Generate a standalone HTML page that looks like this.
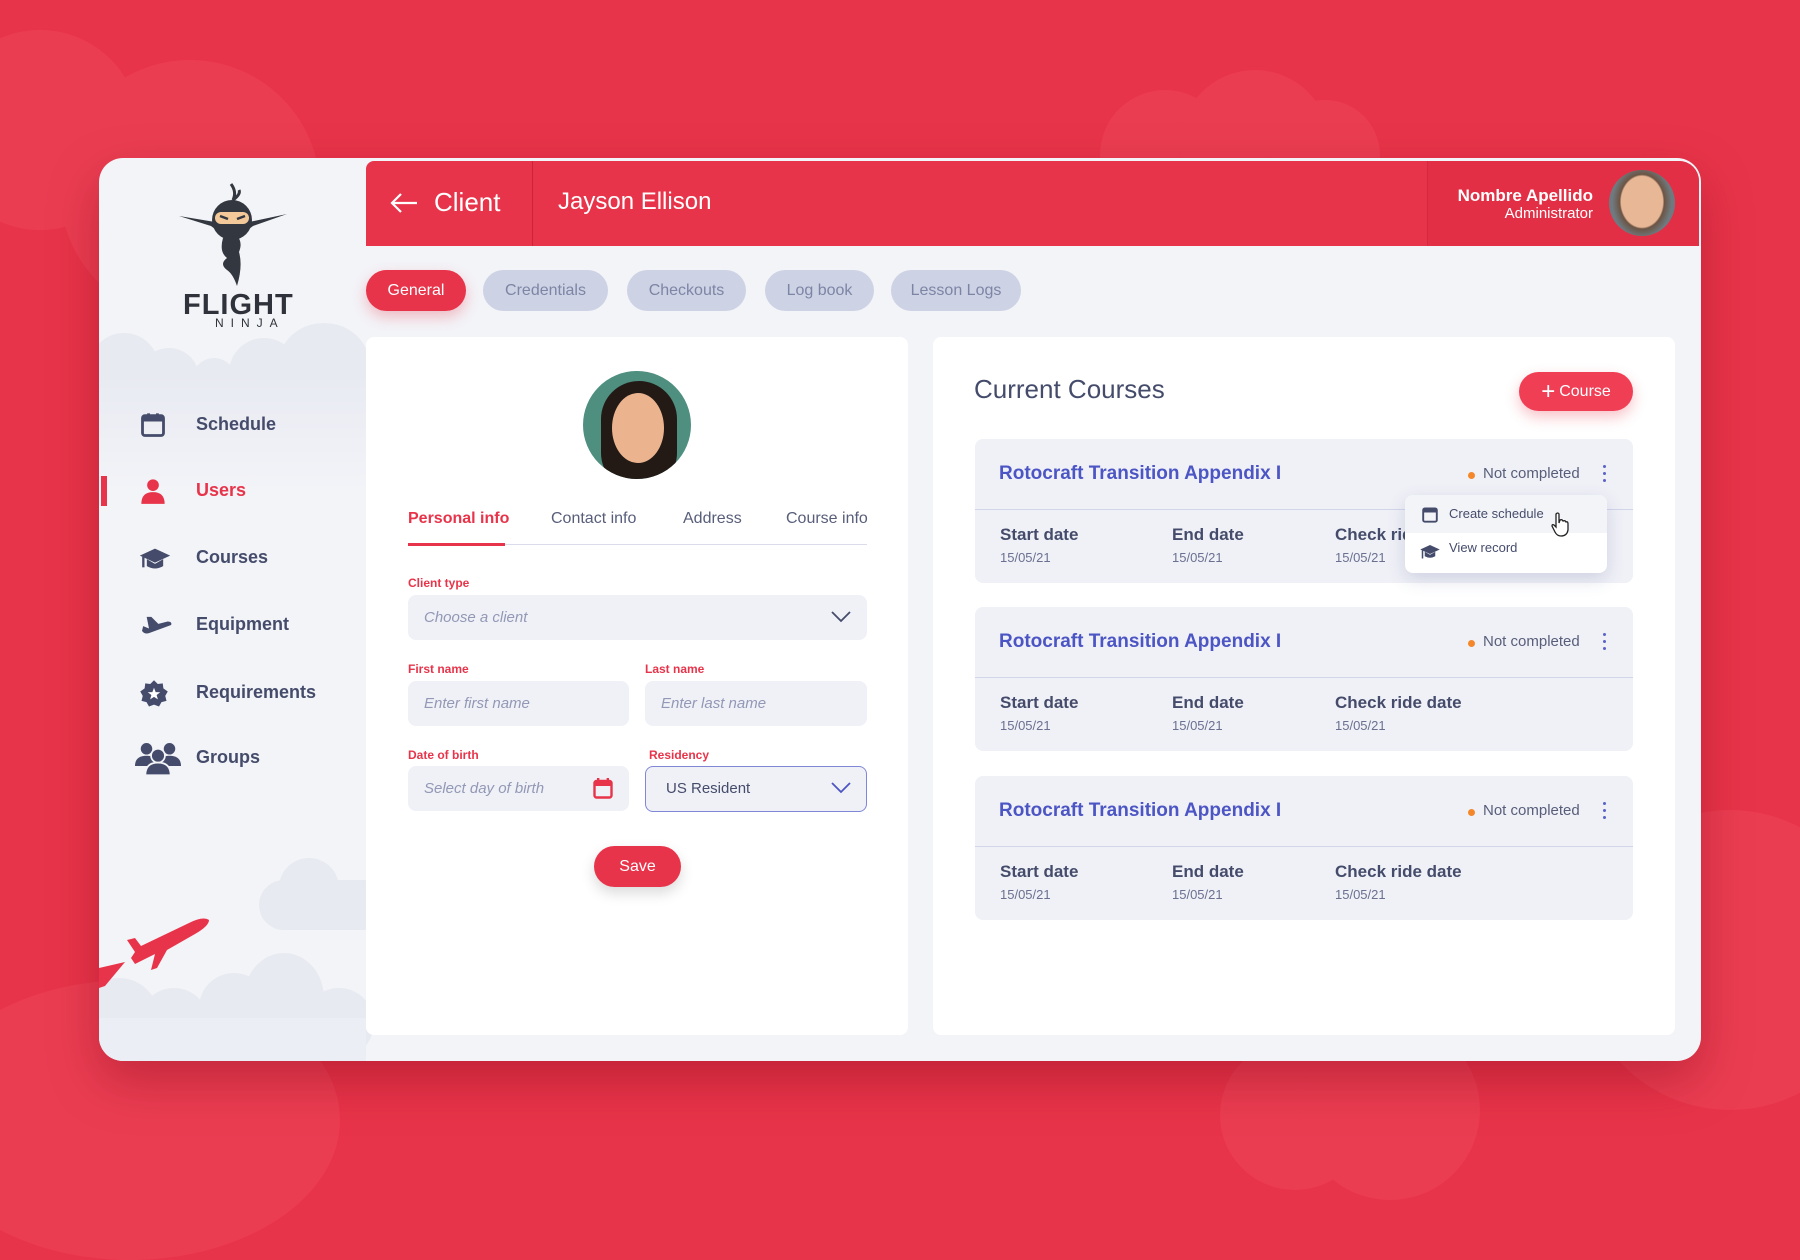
<!DOCTYPE html>
<html><head><meta charset="utf-8"><style>
*{box-sizing:border-box;margin:0;padding:0}
body{width:1800px;height:1220px;overflow:hidden;background:#e8344a;font-family:"Liberation Sans",sans-serif;position:relative}
.a{position:absolute}
.cl{position:absolute;border-radius:50%;background:#eb3d52}
.card{left:99px;top:158px;width:1602px;height:903px;background:#f3f4f8;border-radius:24px;overflow:hidden;box-shadow:0 20px 50px rgba(120,0,20,.35)}
.sc{position:absolute;border-radius:50%;background:#e8eaf2}
.nav{position:absolute;left:0;font-weight:bold;font-size:18px;color:#454c6b}
.nav svg{position:absolute;left:40px;top:-14px}
.nav span{position:absolute;left:97px;top:-11px;white-space:nowrap}
.tab{position:absolute;top:112px;height:41px;border-radius:21px;background:#cdd2e4;color:#7d85a5;font-size:16px;line-height:41px;text-align:center}
.panel{position:absolute;top:179px;height:698px;background:#fff;border-radius:8px}
.lbl{position:absolute;color:#e8344a;font-size:12px;font-weight:bold}
.inp{position:absolute;background:#f0f1f7;border-radius:8px;height:45px;color:#9298b5;font-style:italic;font-size:15px;line-height:45px;padding-left:16px}
.cc{position:absolute;left:975px;width:658px;height:144px;background:#f0f1f7;border-radius:8px}
.cc .t{position:absolute;left:24px;top:24px;font-size:19px;font-weight:bold;color:#4c55c4}
.cc .ln{position:absolute;left:0;right:0;top:70px;height:1px;background:#d3d6ea}
.cc .st{position:absolute;left:508px;top:26px;font-size:15px;color:#585e7a}
.cc .st:before{content:"";position:absolute;left:-15px;top:7px;width:7px;height:7px;border-radius:50%;background:#f5872b}
.cc .k{position:absolute;left:628px;top:26px;width:4px}
.cc .k i{display:block;width:3px;height:3px;border-radius:50%;background:#5a62c8;margin-bottom:4px}
.col{position:absolute;top:86px;color:#454c6b}
.col b{font-size:17px;display:block}
.col small{font-size:13px;color:#6a7090;display:block;margin-top:5px}
</style></head><body>
<div class="cl" style="left:-60px;top:30px;width:200px;height:200px"></div>
<div class="cl" style="left:60px;top:60px;width:260px;height:260px"></div>
<div class="cl" style="left:1100px;top:90px;width:130px;height:130px"></div>
<div class="cl" style="left:1180px;top:70px;width:150px;height:150px"></div>
<div class="cl" style="left:1270px;top:100px;width:110px;height:110px"></div>
<div class="cl" style="left:1580px;top:810px;width:300px;height:300px"></div>
<div class="cl" style="left:1220px;top:1040px;width:150px;height:150px"></div>
<div class="cl" style="left:1300px;top:1020px;width:180px;height:180px"></div>
<div class="cl" style="left:-80px;top:980px;width:420px;height:280px"></div>

<div class="a card">
 <div class="sc" style="left:-10px;top:175px;width:70px;height:70px"></div>
 <div class="sc" style="left:40px;top:190px;width:60px;height:60px"></div>
 <div class="sc" style="left:90px;top:200px;width:50px;height:60px"></div>
 <div class="sc" style="left:130px;top:180px;width:70px;height:70px"></div>
 <div class="sc" style="left:180px;top:165px;width:90px;height:80px"></div>
 <div class="a" style="left:0;top:215px;width:267px;height:120px;background:linear-gradient(#e8eaf2,#f3f4f8)"></div>
 <div class="sc" style="left:180px;top:700px;width:60px;height:60px"></div>
 <div class="sc" style="left:160px;top:722px;width:130px;height:50px;border-radius:25px"></div>
 <div class="sc" style="left:-20px;top:820px;width:80px;height:80px"></div>
 <div class="sc" style="left:40px;top:830px;width:70px;height:70px"></div>
 <div class="sc" style="left:100px;top:815px;width:70px;height:70px"></div>
 <div class="sc" style="left:145px;top:795px;width:80px;height:90px"></div>
 <div class="sc" style="left:205px;top:830px;width:70px;height:70px"></div>
 <div class="a" style="left:0;top:860px;width:267px;height:43px;background:#eceef5"></div>
 <svg class="a" style="left:0;top:740px" width="135" height="90" viewBox="0 0 135 90"><path d="M28 42 L36 40 L42 48 L90 25 Q104 18 110 22 Q110 28 96 36 L68 52 L58 70 L52 72 L56 56 L36 66 L32 60 L36 54 Z" fill="#e8344a"/><path d="M0 90 L0 70 L26 64 L6 88 Z" fill="#e8344a"/></svg>
 <svg class="a" style="left:80px;top:24px" width="108" height="108" viewBox="0 0 108 108"><path d="M52 2 Q58 10 54 18 Q62 12 60 8" stroke="#333740" stroke-width="3" fill="none"/><path d="M0 34 L32 44 L40 50 L36 40 Z" fill="#333740"/><path d="M108 32 L74 44 L66 50 L70 40 Z" fill="#333740"/><circle cx="53" cy="38" r="20" fill="#333740"/><rect x="36" y="30" width="34" height="12" rx="6" fill="#f3c99a"/><path d="M41 34l8 3M66 34l-8 3" stroke="#333740" stroke-width="2.5"/><path d="M44 56 Q40 70 48 76 Q40 82 48 88 Q54 92 58 104 Q64 84 60 70 Q64 60 58 54 Z" fill="#333740"/></svg>
 <div class="a" style="left:84px;top:131px;font-size:29px;font-weight:900;color:#2f323a;letter-spacing:1px">FLIGHT</div>
 <div class="a" style="left:116px;top:158px;font-size:12px;color:#2f323a;letter-spacing:7px">NINJA</div>
 <div class="nav" style="top:267px"><svg width="28" height="28" viewBox="0 0 24 24"><rect x="3" y="4" width="18" height="17" rx="2" fill="none" stroke="#454c6b" stroke-width="2.4"/><rect x="3" y="4" width="18" height="5" fill="#454c6b"/><rect x="7" y="2" width="2.4" height="4" fill="#454c6b"/><rect x="14.6" y="2" width="2.4" height="4" fill="#454c6b"/></svg><span>Schedule</span></div>
 <div class="a" style="left:2px;top:318px;width:6px;height:30px;background:#e8344a"></div>
 <div class="nav" style="top:333px;color:#e8344a"><svg width="28" height="28" viewBox="0 0 24 24"><circle cx="12" cy="7" r="5" fill="#e8344a"/><path d="M2 23 Q2 13 12 13 Q22 13 22 23 Z" fill="#e8344a"/></svg><span>Users</span></div>
 <div class="nav" style="top:400px"><svg width="32" height="28" viewBox="0 0 26 24"><path d="M13 4 L26 10 L13 16 L0 10 Z" fill="#454c6b"/><path d="M6 13 L6 19 Q13 23 20 19 L20 13 L13 17 Z" fill="#454c6b"/><path d="M3 11 L3 20" stroke="#454c6b" stroke-width="2"/></svg><span>Courses</span></div>
 <div class="nav" style="top:467px"><svg width="34" height="28" viewBox="0 0 28 24"><path d="M6 5 L10 5 L16 11 L24 9 Q28 9 27 12 L8 19 Q4 20 2 17 L3 13 L8 15 Z" fill="#454c6b"/></svg><span>Equipment</span></div>
 <div class="nav" style="top:535px"><svg width="30" height="30" viewBox="0 0 24 24"><path d="M12 1 L15 4 L19 3.5 L19.5 7.5 L23 10 L21 13.5 L22 17.5 L18 18.5 L16 22 L12 20.5 L8 22 L6 18.5 L2 17.5 L3 13.5 L1 10 L4.5 7.5 L5 3.5 L9 4 Z" fill="#454c6b"/><path d="M12 7 L13.3 10.5 L17 10.6 L14.1 12.8 L15.1 16.3 L12 14.3 L8.9 16.3 L9.9 12.8 L7 10.6 L10.7 10.5 Z" fill="#fff"/></svg><span>Requirements</span></div>
 <div class="nav" style="top:600px"><svg width="46" height="36" viewBox="0 0 40 30" style="left:36px;top:-18px"><circle cx="10" cy="7" r="5" fill="#454c6b"/><circle cx="30" cy="7" r="5" fill="#454c6b"/><path d="M0 22 Q0 13 10 13 Q20 13 20 22Z M20 22 Q20 13 30 13 Q40 13 40 22Z" fill="#454c6b"/><circle cx="20" cy="13" r="6" fill="#454c6b" stroke="#f3f4f8" stroke-width="1.5"/><path d="M9 30 Q9 19 20 19 Q31 19 31 30Z" fill="#454c6b" stroke="#f3f4f8" stroke-width="1.5"/></svg><span>Groups</span></div>

 <div class="a" style="left:267px;top:3px;width:1333px;height:85px;background:#e8344a;border-radius:8px 20px 0 0"></div>
 <div class="a" style="left:1328px;top:3px;width:272px;height:85px;background:#e32f45;border-left:1px solid #d22a3e;border-radius:0 20px 0 0"></div>
 <div class="a" style="left:433px;top:3px;width:1px;height:85px;background:#cc2439"></div>
 <svg class="a" style="left:290px;top:34px" width="30" height="22" viewBox="0 0 30 22"><path d="M28 11 H3 M12 2 L3 11 L12 20" stroke="#fff" stroke-width="2.2" fill="none"/></svg>
 <div class="a" style="left:335px;top:29px;font-size:26px;color:#fff">Client</div>
 <div class="a" style="left:459px;top:30px;font-size:24px;color:#fff">Jayson Ellison</div>
 <div class="a" style="right:108px;top:28px;font-size:17px;font-weight:bold;color:#fff;text-align:right">Nombre Apellido</div>
 <div class="a" style="right:108px;top:47px;font-size:15px;color:#fff;text-align:right">Administrator</div>
 <div class="a" style="left:1510px;top:12px;width:66px;height:66px;border-radius:50%;background:radial-gradient(ellipse 45% 55% at 50% 48%,#e8b796 0 70%,#6b5444 75%,#6f7a80 100%)"></div>

 <div class="tab" style="left:267px;width:100px;background:#e8344a;color:#fff;box-shadow:0 6px 14px rgba(232,52,74,.3)">General</div>
 <div class="tab" style="left:384px;width:125px">Credentials</div>
 <div class="tab" style="left:528px;width:119px">Checkouts</div>
 <div class="tab" style="left:666px;width:109px">Log book</div>
 <div class="tab" style="left:792px;width:130px">Lesson Logs</div>

 <div class="panel" style="left:267px;width:542px"></div>
 <div class="a" style="left:484px;top:213px;width:108px;height:108px;border-radius:50%;overflow:hidden;background:#4f8f80">
  <div class="a" style="left:18px;top:10px;width:76px;height:110px;border-radius:40px;background:#231a16"></div>
  <div class="a" style="left:29px;top:22px;width:52px;height:70px;border-radius:26px/35px;background:#ebb48f"></div>
 </div>
 <div class="a" style="left:309px;top:352px;font-size:16px;font-weight:bold;color:#e8344a">Personal info</div>
 <div class="a" style="left:452px;top:352px;font-size:16px;color:#585e7a">Contact info</div>
 <div class="a" style="left:584px;top:352px;font-size:16px;color:#585e7a">Address</div>
 <div class="a" style="left:687px;top:352px;font-size:16px;color:#585e7a">Course info</div>
 <div class="a" style="left:309px;top:386px;width:459px;height:1px;background:#dadcea"></div>
 <div class="a" style="left:309px;top:385px;width:97px;height:3px;background:#e8344a"></div>
 <div class="lbl" style="left:309px;top:418px">Client type</div>
 <div class="inp" style="left:309px;top:437px;width:459px">Choose a client</div>
 <svg class="a" style="left:732px;top:453px" width="20" height="12" viewBox="0 0 20 12"><path d="M1 1 L10 10 L19 1" stroke="#454c6b" stroke-width="1.8" fill="none"/></svg>
 <div class="lbl" style="left:309px;top:504px">First name</div>
 <div class="inp" style="left:309px;top:523px;width:221px">Enter first name</div>
 <div class="lbl" style="left:546px;top:504px">Last name</div>
 <div class="inp" style="left:546px;top:523px;width:222px">Enter last name</div>
 <div class="lbl" style="left:309px;top:590px">Date of birth</div>
 <div class="inp" style="left:309px;top:608px;width:221px">Select day of birth</div>
 <svg class="a" style="left:494px;top:620px" width="20" height="21" viewBox="0 0 20 21"><rect x="1.5" y="3" width="17" height="16.5" rx="2" fill="none" stroke="#e8344a" stroke-width="2.4"/><rect x="1.5" y="3" width="17" height="5" fill="#e8344a"/><rect x="4" y="0" width="2.4" height="4" fill="#e8344a"/><rect x="13.6" y="0" width="2.4" height="4" fill="#e8344a"/></svg>
 <div class="lbl" style="left:550px;top:590px">Residency</div>
 <div class="a" style="left:546px;top:608px;width:222px;height:46px;border:1.5px solid #7f87d6;border-radius:8px;background:#f0f1f7;font-size:15px;color:#454c6b;line-height:43px;padding-left:20px">US Resident</div>
 <svg class="a" style="left:732px;top:624px" width="20" height="12" viewBox="0 0 20 12"><path d="M1 1 L10 10 L19 1" stroke="#4c55c4" stroke-width="1.8" fill="none"/></svg>
 <div class="a" style="left:495px;top:688px;width:87px;height:41px;border-radius:21px;background:#e8344a;color:#fff;font-size:16px;line-height:41px;text-align:center;box-shadow:0 6px 14px rgba(0,0,0,.15)">Save</div>

 <div class="panel" style="left:834px;width:742px"></div>
 <div class="a" style="left:875px;top:216px;font-size:26px;color:#454c6b">Current Courses</div>
 <div class="a" style="left:1420px;top:214px;width:114px;height:39px;border-radius:20px;background:#f03e55;color:#fff;font-size:16px;line-height:39px;text-align:center;box-shadow:0 6px 14px rgba(232,52,74,.3)"><span style="font-size:24px;vertical-align:-3px;margin-right:4px">+</span>Course</div>

 <div class="cc" style="left:876px;top:281px"><div class="t">Rotocraft Transition Appendix I</div><div class="ln"></div><div class="st">Not completed</div><div class="k"><i></i><i></i><i></i></div>
  <div class="col" style="left:25px"><b>Start date</b><small>15/05/21</small></div><div class="col" style="left:197px"><b>End date</b><small>15/05/21</small></div><div class="col" style="left:360px"><b>Check ride date</b><small>15/05/21</small></div></div>
 <div class="cc" style="left:876px;top:449px"><div class="t">Rotocraft Transition Appendix I</div><div class="ln"></div><div class="st">Not completed</div><div class="k"><i></i><i></i><i></i></div>
  <div class="col" style="left:25px"><b>Start date</b><small>15/05/21</small></div><div class="col" style="left:197px"><b>End date</b><small>15/05/21</small></div><div class="col" style="left:360px"><b>Check ride date</b><small>15/05/21</small></div></div>
 <div class="cc" style="left:876px;top:618px"><div class="t">Rotocraft Transition Appendix I</div><div class="ln"></div><div class="st">Not completed</div><div class="k"><i></i><i></i><i></i></div>
  <div class="col" style="left:25px"><b>Start date</b><small>15/05/21</small></div><div class="col" style="left:197px"><b>End date</b><small>15/05/21</small></div><div class="col" style="left:360px"><b>Check ride date</b><small>15/05/21</small></div></div>

 <div class="a" style="left:1306px;top:337px;width:202px;height:78px;background:#fff;border-radius:8px;box-shadow:0 6px 18px rgba(70,80,140,.2);overflow:hidden">
  <div style="height:38px;background:#f3f4f8"></div>
  <svg class="a" style="left:17px;top:11px" width="16" height="17" viewBox="0 0 20 21"><rect x="1.5" y="3" width="17" height="16.5" rx="2" fill="none" stroke="#454c6b" stroke-width="2.4"/><rect x="1.5" y="3" width="17" height="5" fill="#454c6b"/></svg>
  <div class="a" style="left:44px;top:11px;font-size:13px;color:#454c6b">Create schedule</div>
  <svg class="a" style="left:14px;top:47px" width="22" height="18" viewBox="0 0 26 24"><path d="M13 4 L26 10 L13 16 L0 10 Z" fill="#454c6b"/><path d="M6 13 L6 19 Q13 23 20 19 L20 13 L13 17 Z" fill="#454c6b"/><path d="M3 11 L3 22" stroke="#454c6b" stroke-width="2"/></svg>
  <div class="a" style="left:44px;top:45px;font-size:13px;color:#454c6b">View record</div>
 </div>
 <svg class="a" style="left:1451px;top:354px" width="20" height="26" viewBox="0 0 20 26"><path d="M6 2 Q8 0 9 2 V11 L10 8 Q12 7 13 9 Q15 8 16 10 Q18 9 18 12 V18 Q17 24 11 24 Q7 24 5 20 L2 14 Q2 12 4 13 L6 15 Z" fill="#fff" stroke="#222" stroke-width="1.3"/></svg>
</div>
</body></html>
